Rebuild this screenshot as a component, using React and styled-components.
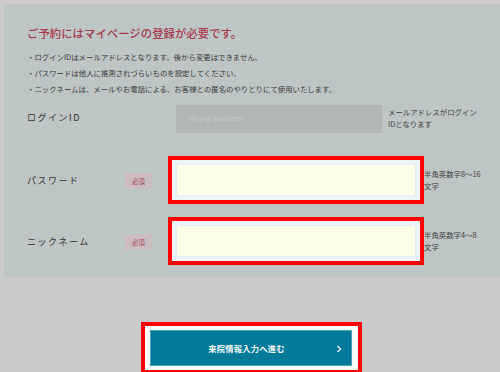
import React from "react";
import styled, { createGlobalStyle } from "styled-components";

const Global = createGlobalStyle`
  html, body { margin: 0; padding: 0; }
  body {
    width: 500px;
    height: 372px;
    overflow: hidden;
    background: #cbcbcb;
    font-family: "Noto Sans CJK JP", "Noto Sans", sans-serif;
    color: #3a3a3a;
  }
`;

const Page = styled.div`
  width: 500px;
  height: 372px;
  overflow: hidden;
  display: flex;
  flex-direction: column;
  border-top: 4px solid #cfcacd;
  box-sizing: border-box;
`;

const Panel = styled.section`
  margin-left: 4px;
  background: #bec5c5;
  padding: 21px 0 12px 23px;
  display: flex;
  flex-direction: column;
`;

const Title = styled.h2`
  margin: 0;
  font-size: 11.3px;
  line-height: 16px;
  font-weight: 500;
  color: #a63a4c;
  letter-spacing: 0.1px;
`;

const Notes = styled.ul`
  list-style: none;
  margin: 8px 0 0;
  padding: 0;
  font-size: 7.4px;
  line-height: 16px;
  color: #3a3a3a;
`;

const Form = styled.div`
  display: flex;
  flex-direction: column;
`;

const Row = styled.div`
  display: flex;
  align-items: center;
  margin-top: ${(p) => p.$gap}px;
`;

const Label = styled.div`
  width: 98px;
  font-size: 9px;
  letter-spacing: 1.5px;
  color: #333;
  margin-bottom: ${(p) => (p.$raise ? 4 : 0)}px;
`;

const BadgeSlot = styled.div`
  width: 27px;
  margin-right: 16px;
  display: flex;
`;

const Badge = styled.span`
  width: 27px;
  height: 16px;
  display: flex;
  align-items: center;
  justify-content: center;
  background: #cbbcbf;
  color: #a2425a;
  font-size: 6.4px;
  margin-top: 2px;
`;

const FieldBox = styled.div`
  display: flex;
  box-sizing: border-box;
  border: 4px solid ${(p) => (p.$marked ? "#ff0000" : "transparent")};
  padding: ${(p) => (p.$marked ? "4px" : "4px 2px 4px 4px")};
  background: ${(p) => (p.$marked ? "#edf3f6" : "transparent")};
`;

const GrayInput = styled.div`
  width: 206px;
  height: 28px;
  background: #b3b6b6;
  color: #c9cccc;
  font-size: 5.6px;
  display: flex;
  align-items: center;
  padding-left: 12px;
  box-sizing: border-box;
`;

const TextInput = styled.input`
  width: 240px;
  height: 32px;
  box-sizing: border-box;
  border: 1px solid #e6eef0;
  background: #fcfee8;
  outline: none;
  padding: 0 8px;
  font-family: inherit;
`;

const Hint = styled.div`
  font-size: 7.4px;
  line-height: 12.5px;
  color: #3f3f3f;
  margin-top: ${(p) => p.$top || 0}px;
`;

const ButtonFrame = styled.div`
  margin: 45px 0 0 141px;
  width: 221px;
  box-sizing: border-box;
  border: 4px solid #ff0000;
  background: #ffffff;
  padding: 4px 6px 4px 5px;
`;

const NextButton = styled.button`
  width: 202px;
  height: 36px;
  box-sizing: border-box;
  border: 1px solid #4d9db3;
  background: #037a99;
  color: #f4f8fa;
  font-family: inherit;
  font-size: 8.3px;
  font-weight: 700;
  display: grid;
  grid-template-columns: 1fr auto 1fr;
  align-items: center;
  padding: 0 9px 0 0;
  cursor: pointer;
`;

const ButtonText = styled.span`
  grid-column: 2;
  letter-spacing: 0.2px;
`;

const Chevron = styled.svg`
  grid-column: 3;
  justify-self: end;
  margin-top: 1px;
`;

export default function App() {
  return (
    <>
      <Global />
      <Page>
        <Panel>
          <Title>ご予約にはマイページの登録が必要です。</Title>
          <Notes>
            <li>・ログインIDはメールアドレスとなります。後から変更はできません。</li>
            <li>・パスワードは他人に推測されづらいものを設定してください。</li>
            <li>・ニックネームは、メールやお電話による、お客様との匿名のやりとりにて使用いたします。</li>
          </Notes>
          <Form>
            <Row $gap={0}>
              <Label $raise>ログインID</Label>
              <BadgeSlot />
              <FieldBox>
                <GrayInput>info@agi-ikumo.com</GrayInput>
              </FieldBox>
              <Hint $top={-2}>
                メールアドレスがログイン
                <br />
                IDとなります
              </Hint>
            </Row>
            <Row $gap={15}>
              <Label>パスワード</Label>
              <BadgeSlot>
                <Badge>必須</Badge>
              </BadgeSlot>
              <FieldBox $marked>
                <TextInput type="password" />
              </FieldBox>
              <Hint>
                半角英数字8～16
                <br />
                文字
              </Hint>
            </Row>
            <Row $gap={13}>
              <Label>ニックネーム</Label>
              <BadgeSlot>
                <Badge>必須</Badge>
              </BadgeSlot>
              <FieldBox $marked>
                <TextInput type="text" />
              </FieldBox>
              <Hint>
                半角英数字4～8
                <br />
                文字
              </Hint>
            </Row>
          </Form>
        </Panel>
        <ButtonFrame>
          <NextButton>
            <ButtonText>来院情報入力へ進む</ButtonText>
            <Chevron width="6" height="8" viewBox="0 0 6 8">
              <path d="M1.5 1 L4.5 4 L1.5 7" fill="none" stroke="#ffffff" strokeWidth="1.2" />
            </Chevron>
          </NextButton>
        </ButtonFrame>
      </Page>
    </>
  );
}
